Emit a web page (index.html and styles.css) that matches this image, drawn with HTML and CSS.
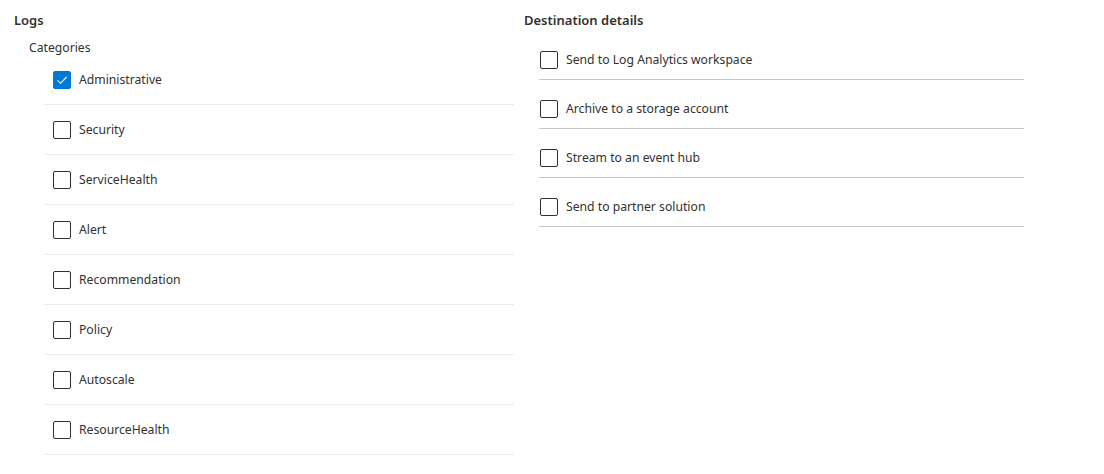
FILE: index.html
```html
<!DOCTYPE html>
<html lang="en">
<head>
    <meta charset="UTF-8">
    <title>Diagnostic setting</title>
    <link rel="stylesheet" href="styles.css">
</head>
<body>
    <div class="page">

        <!-- Logs column -->
        <section class="logs">
            <h2 class="section-title">Logs</h2>
            <div class="sub-title">Categories</div>
            <ul class="category-list">
                <li class="row">
                    <span class="checkbox checked">
                        <svg viewBox="0 0 18 18" width="18" height="18"><path d="M4.5 9.3 L7.6 12.3 L13.6 6" fill="none" stroke="#fff" stroke-width="1.1"/></svg>
                    </span>
                    <span class="label">Administrative</span>
                </li>
                <li class="row"><span class="checkbox"></span><span class="label">Security</span></li>
                <li class="row"><span class="checkbox"></span><span class="label">ServiceHealth</span></li>
                <li class="row"><span class="checkbox"></span><span class="label">Alert</span></li>
                <li class="row"><span class="checkbox"></span><span class="label">Recommendation</span></li>
                <li class="row"><span class="checkbox"></span><span class="label">Policy</span></li>
                <li class="row"><span class="checkbox"></span><span class="label">Autoscale</span></li>
                <li class="row"><span class="checkbox"></span><span class="label">ResourceHealth</span></li>
            </ul>
        </section>

        <!-- Destination column -->
        <section class="destinations">
            <h2 class="section-title">Destination details</h2>
            <ul class="dest-list">
                <li class="row"><span class="checkbox"></span><span class="label">Send to Log Analytics workspace</span></li>
                <li class="row"><span class="checkbox"></span><span class="label">Archive to a storage account</span></li>
                <li class="row"><span class="checkbox"></span><span class="label">Stream to an event hub</span></li>
                <li class="row"><span class="checkbox"></span><span class="label">Send to partner solution</span></li>
            </ul>
        </section>
    </div>
</body>
</html>
```

FILE: styles.css
```css
/* General */
body {
    margin: 0;
    padding: 0;
    background-color: #fff;
    color: #323130;
    font-family: 'Noto Sans', 'Open Sans', Arial, sans-serif;
    font-size: 12.2px;
}

ul {
    list-style: none;
    margin: 0;
    padding: 0;
}

.page {
    display: flex;
    padding: 10px 0 0 14px;
}

.section-title {
    margin: 0;
    font-size: 13px;
    font-weight: 600;
    line-height: 20px;
}

/* Logs column */
.logs {
    width: 500px;
    flex-shrink: 0;
}

.sub-title {
    margin: 8px 0 0 15px;
    line-height: 20px;
}

.category-list {
    margin: -3px 0 0 30px;
    width: 470px;
}

.category-list .row {
    height: 49px;
    border-bottom: 1px solid #edebe9;
    padding-left: 9px;
}

/* Destination column */
.destinations {
    margin-left: 10px;
}

.dest-list {
    margin: 1px 0 0 15px;
    width: 485px;
}

.dest-list .row {
    height: 28px;
    padding: 20px 0 0 1px;
    align-items: flex-start;
    border-bottom: 1px solid #c8c6c4;
}

/* Rows and checkboxes */
.row {
    display: flex;
    align-items: center;
}

.checkbox {
    width: 16px;
    height: 16px;
    border: 1px solid #323130;
    border-radius: 2px;
    flex-shrink: 0;
    position: relative;
}

.checkbox.checked {
    background-color: #0078d4;
    border-color: #0078d4;
}

.checkbox svg {
    position: absolute;
    left: -1px;
    top: -1px;
}

.label {
    margin-left: 8px;
    line-height: 18px;
}
```
